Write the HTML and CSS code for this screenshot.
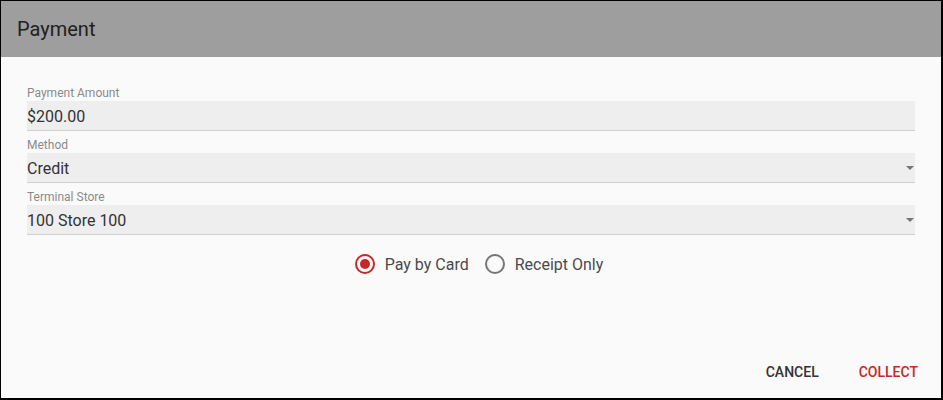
FILE: index.html
```html
<!DOCTYPE html>
<html>
<head>
<meta charset="utf-8">
<link rel="stylesheet" href="styles.css">
</head>
<body>
<div class="dialog">
  <div class="dialog-header">Payment</div>
  <div class="dialog-body">
    <div class="field">
      <div class="field-label">Payment Amount</div>
      <div class="field-box">$200.00</div>
    </div>
    <div class="field">
      <div class="field-label">Method</div>
      <div class="field-box select">Credit<span class="arrow"></span></div>
    </div>
    <div class="field">
      <div class="field-label">Terminal Store</div>
      <div class="field-box select">100 Store 100<span class="arrow"></span></div>
    </div>
    <div class="radio-row">
      <label class="radio-item"><span class="radio checked"></span><span class="radio-text">Pay by Card</span></label>
      <label class="radio-item"><span class="radio"></span><span class="radio-text">Receipt Only</span></label>
    </div>
  </div>
  <div class="dialog-actions">
    <button class="btn">CANCEL</button>
    <button class="btn primary">COLLECT</button>
  </div>
</div>
</body>
</html>
```

FILE: styles.css
```css
html, body {
  margin: 0;
  padding: 0;
  background: #fafafa;
}
.dialog {
  width: 943px;
  height: 400px;
  box-sizing: border-box;
  border: 1px solid #000;
  border-right-width: 2px;
  border-bottom-width: 2px;
  display: flex;
  flex-direction: column;
  background: #fafafa;
  font-family: Roboto, "Liberation Sans", sans-serif;
}
.dialog-header {
  height: 56px;
  line-height: 56px;
  background: #9e9e9e;
  padding-left: 16px;
  font-size: 20px;
  color: #212121;
}
.dialog-body {
  flex: 1;
  padding: 22px 26px 0 26px;
}
.field-label {
  height: 22px;
  box-sizing: border-box;
  padding-top: 7px;
  line-height: 14px;
  font-size: 12px;
  color: #8a8a8a;
}
.field-box {
  position: relative;
  height: 29px;
  padding-top: 2px;
  box-sizing: content-box;
  height: 27px;
  line-height: 27px;
  background: #eeeeee;
  border-bottom: 1px solid #cfcfcf;
  font-size: 16px;
  color: #333;
}
.arrow {
  position: absolute;
  right: 1px;
  top: 13px;
  width: 0;
  height: 0;
  border-left: 4px solid transparent;
  border-right: 4px solid transparent;
  border-top: 4px solid #757575;
}
.radio-row {
  display: flex;
  justify-content: center;
  align-items: center;
  gap: 16px;
  height: 42px;
  margin-top: 8px;
  padding-left: 16px;
}
.radio-item {
  display: flex;
  align-items: center;
  gap: 10px;
  font-size: 16px;
  color: #4a4a4a;
}
.radio {
  width: 20px;
  height: 20px;
  box-sizing: border-box;
  border: 2px solid #757575;
  border-radius: 50%;
  position: relative;
}
.radio.checked {
  border-color: #c62828;
}
.radio.checked::after {
  content: "";
  position: absolute;
  left: 3px;
  top: 3px;
  width: 10px;
  height: 10px;
  border-radius: 50%;
  background: #c62828;
}
.dialog-actions {
  display: flex;
  justify-content: flex-end;
  gap: 8px;
  padding: 0 7px 8px 0;
}
.btn {
  font-family: Roboto, "Liberation Sans", sans-serif;
  font-size: 14px;
  font-weight: 500;
  line-height: 36px;
  height: 36px;
  padding: 0 16px;
  min-width: 64px;
  border: none;
  background: transparent;
  color: #333;
  cursor: pointer;
}
.btn.primary {
  color: #c62828;
}
```
